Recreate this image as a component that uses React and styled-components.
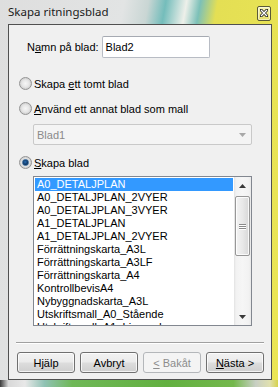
import React from 'react';
import styled, { createGlobalStyle, css } from 'styled-components';

const GlobalStyle = createGlobalStyle`
  html, body {
    margin: 0;
    padding: 0;
  }
  body {
    width: 278px;
    height: 387px;
    overflow: hidden;
    font-family: "Liberation Sans", Arial, sans-serif;
    font-size: 11px;
    color: #000;
  }
`;

const Window = styled.div`
  width: 278px;
  height: 387px;
  box-sizing: border-box;
  display: flex;
  flex-direction: column;
  background: linear-gradient(100deg, #dedede 0%, #e2e4e4 36%, #c9d6d4 43%, #74bdbb 48%, #eef0ea 54%, #7cc0b8 58%, #e4df54 63%, #ebe655 100%);
`;

const TitleBar = styled.div`
  height: 24px;
  flex: none;
  display: flex;
  align-items: center;
  justify-content: space-between;
  padding: 0 6px 0 8px;
  box-sizing: border-box;
`;

const Title = styled.span`
  font-family: "Noto Sans", "Open Sans", sans-serif;
  font-size: 11.5px;
  color: #1a1a1a;
  margin-top: -1px;
`;

const CloseButton = styled.div`
  width: 14px;
  height: 15px;
  box-sizing: border-box;
  border: 1px solid #5b5a36;
  border-radius: 2px;
  background: linear-gradient(#f6f3b4, #e4de6a);
  box-shadow: inset 0 0 0 1px rgba(255, 255, 255, 0.5);
  display: flex;
  align-items: center;
  justify-content: center;
  margin-right: 1px;
  margin-top: 2px;
`;

const Middle = styled.div`
  flex: 1;
  display: flex;
  padding: 0 6px 0 8px;
  min-height: 0;
`;

const Client = styled.div`
  flex: 1;
  border: 1px solid #505050;
  background: #f0f0f0;
  display: flex;
  flex-direction: column;
`;

const BottomEdge = styled.div`
  height: 7px;
  flex: none;
  background: linear-gradient(90deg, #3a3a3a 0%, #d8d8d8 3%, #e8e8e8 9%, #8fc2b4 16%, #6fb857 26%, #62b040 60%, #74b84c 84%, #c8cfc4 92%, #e0e0b0 97%, #d6d24c 100%);
`;

const NameRow = styled.div`
  display: flex;
  align-items: center;
  margin: 11px 0 0 18px;
  gap: 3px;
`;

const TextInput = styled.div`
  width: 108px;
  height: 22px;
  box-sizing: border-box;
  border: 1px solid #b8bcc4;
  border-top-color: #a6aab2;
  border-radius: 2px;
  background: #fff;
  display: flex;
  align-items: center;
  padding-left: 3px;
`;

const RadioRow = styled.div`
  display: flex;
  align-items: center;
  gap: 2px;
  margin: ${p => p.$top}px 0 0 10px;
  height: 13px;
`;

const RadioCircle = styled.span`
  width: 13px;
  height: 13px;
  box-sizing: border-box;
  border-radius: 50%;
  border: 1px solid #949494;
  background: radial-gradient(circle at 50% 50%, #f6f6f6 0%, #e6e6e6 45%, #cdcdcd 75%, #e8e8e8 100%);
  display: inline-flex;
  align-items: center;
  justify-content: center;
  flex: none;
  ${p => p.$checked && css`
    &::after {
      content: '';
      width: 7px;
      height: 7px;
      box-sizing: border-box;
      border-radius: 50%;
      border: 1px solid #2d5f92;
      background: radial-gradient(circle at 45% 40%, #2a6fb6 0%, #123b6a 55%, #0b2a4e 100%);
    }
  `}
`;

const Combo = styled.div`
  margin: 9px 0 0 24px;
  width: 219px;
  height: 21px;
  box-sizing: border-box;
  border: 1px solid #c9c9c9;
  border-radius: 2px;
  background: #f4f4f4;
  display: flex;
  align-items: center;
  justify-content: space-between;
  padding: 0 5px 0 3px;
  color: #8a8a8a;
`;

const ListBox = styled.div`
  margin: 7px 0 0 24px;
  width: 219px;
  height: 150px;
  box-sizing: border-box;
  border: 1px solid #828790;
  background: #fff;
  display: flex;
  overflow: hidden;
`;

const Items = styled.div`
  width: 200px;
  flex: none;
  padding: 1px 1px 0 1px;
  box-sizing: border-box;
  overflow: hidden;
`;

const Item = styled.div`
  height: 13px;
  line-height: 13px;
  padding-left: 2px;
  white-space: nowrap;
  ${p => p.$selected && css`
    background: #3399ff;
    color: #fff;
  `}
`;

const ScrollBar = styled.div`
  width: 17px;
  flex: none;
  display: flex;
  flex-direction: column;
  background: linear-gradient(90deg, #e2e2e2 0, #f2f2f2 12%, #f6f6f6 50%, #f2f2f2 88%, #e8e8e8 100%);
`;

const ArrowBox = styled.div`
  height: 17px;
  flex: none;
  display: flex;
  align-items: center;
  justify-content: center;
`;

const Track = styled.div`
  flex: 1;
  display: flex;
  flex-direction: column;
  padding: 2px 1px 0 1px;
`;

const Thumb = styled.div`
  height: 60px;
  box-sizing: border-box;
  border: 1px solid #979797;
  border-radius: 2px;
  background: linear-gradient(90deg, #f3f3f3 0%, #e9e9e9 50%, #d8d8d8 100%);
  box-shadow: inset 0 0 0 1px rgba(255, 255, 255, 0.8);
  display: flex;
  flex-direction: column;
  align-items: center;
  justify-content: center;
  gap: 1px;
`;

const Grip = styled.span`
  width: 7px;
  height: 1px;
  background: #8a8a8a;
  box-shadow: 0 1px 0 #fff;
`;

const Separator = styled.div`
  margin: 16px 7px 0 7px;
  height: 0;
  border-top: 1px solid #a0a0a0;
  border-bottom: 1px solid #fff;
`;

const ButtonRow = styled.div`
  margin: 8px 7px 0 8px;
  display: flex;
  justify-content: space-between;
`;

const Button = styled.button`
  width: 58px;
  height: 21px;
  box-sizing: border-box;
  border: 1px solid #707070;
  border-radius: 3px;
  background: linear-gradient(#f2f2f2 0%, #ebebeb 48%, #dddddd 52%, #cfcfcf 100%);
  box-shadow: inset 0 0 0 1px rgba(255, 255, 255, 0.75);
  font-family: "Liberation Sans", Arial, sans-serif;
  font-size: 11px;
  color: #000;
  padding: 0;
  ${p => p.disabled && css`
    border-color: #b4b7ba;
    background: #f4f4f4;
    box-shadow: none;
    color: #8c8c8c;
  `}
`;

const Arrow = ({ up, color = '#3a3a3a' }) => (
  <svg width="7" height="4" viewBox="0 0 7 4">
    <path d={up ? 'M0 4 L3.5 0 L7 4 Z' : 'M0 0 L7 0 L3.5 4 Z'} fill={color} />
  </svg>
);

const items = [
  'A0_DETALJPLAN',
  'A0_DETALJPLAN_2VYER',
  'A0_DETALJPLAN_3VYER',
  'A1_DETALJPLAN',
  'A1_DETALJPLAN_2VYER',
  'Förrättningskarta_A3L',
  'Förrättningskarta_A3LF',
  'Förrättningskarta_A4',
  'KontrollbevisA4',
  'Nybyggnadskarta_A3L',
  'Utskriftsmall_A0_Stående',
  'Utskriftsmall_A1_Liggande',
];

export default function App() {
  return (
    <>
      <GlobalStyle />
      <Window>
        <TitleBar>
          <Title>Skapa ritningsblad</Title>
          <CloseButton>
            <svg width="8" height="8" viewBox="0 0 8 8">
              <path d="M1 1 L7 7 M7 1 L1 7" stroke="#2b2b2b" strokeWidth="3" strokeLinecap="square" />
              <path d="M1 1 L7 7 M7 1 L1 7" stroke="#ffffff" strokeWidth="1.2" />
            </svg>
          </CloseButton>
        </TitleBar>
        <Middle>
          <Client>
            <NameRow>
              <span>N<u>a</u>mn på blad:</span>
              <TextInput>Blad2</TextInput>
            </NameRow>
            <RadioRow $top={19}>
              <RadioCircle />
              <span>Skapa <u>e</u>tt tomt blad</span>
            </RadioRow>
            <RadioRow $top={12}>
              <RadioCircle />
              <span><u>A</u>nvänd ett annat blad som mall</span>
            </RadioRow>
            <Combo>
              <span>Blad1</span>
              <Arrow color="#a8a8a8" />
            </Combo>
            <RadioRow $top={11}>
              <RadioCircle $checked />
              <span><u>S</u>kapa blad</span>
            </RadioRow>
            <ListBox>
              <Items>
                {items.map((name, i) => (
                  <Item key={name} $selected={i === 0}>{name}</Item>
                ))}
              </Items>
              <ScrollBar>
                <ArrowBox><Arrow up /></ArrowBox>
                <Track>
                  <Thumb>
                    <Grip />
                    <Grip />
                    <Grip />
                  </Thumb>
                </Track>
                <ArrowBox><Arrow /></ArrowBox>
              </ScrollBar>
            </ListBox>
            <Separator />
            <ButtonRow>
              <Button>Hjälp</Button>
              <Button>Avbryt</Button>
              <Button disabled><u>&lt;</u> Bakåt</Button>
              <Button><u>N</u>ästa &gt;</Button>
            </ButtonRow>
          </Client>
        </Middle>
        <BottomEdge />
      </Window>
    </>
  );
}
